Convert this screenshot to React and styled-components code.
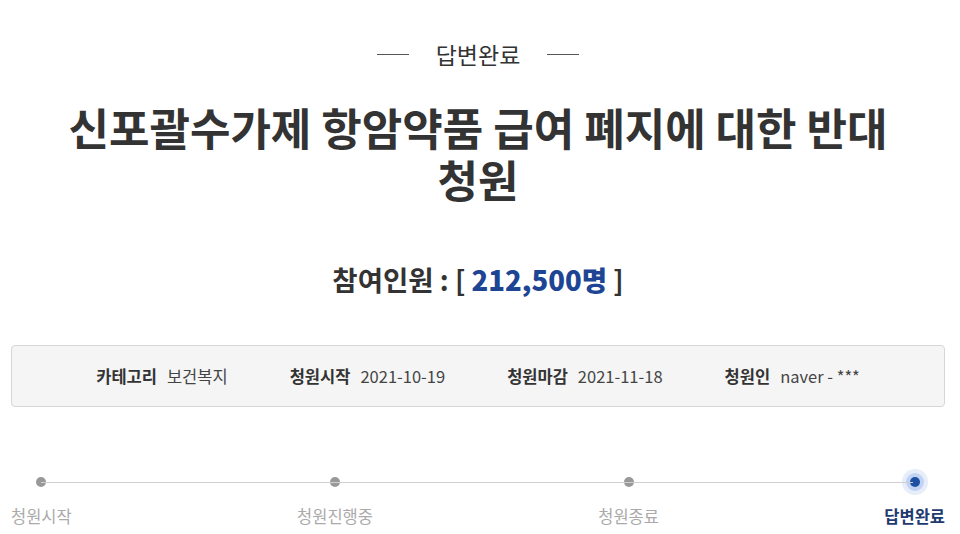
import React from "react";
import styled, { createGlobalStyle } from "styled-components";

const GlobalStyle = createGlobalStyle`
  html, body {
    margin: 0;
    padding: 0;
    background: #fff;
  }
  body {
    font-family: "Noto Sans CJK KR", "Noto Sans", sans-serif;
    color: #333;
  }
`;

const info = [
  { label: "카테고리", value: "보건복지" },
  { label: "청원시작", value: "2021-10-19" },
  { label: "청원마감", value: "2021-11-18" },
  { label: "청원인", value: "naver - ***" },
];

const steps = ["청원시작", "청원진행중", "청원종료", "답변완료"];

export default function App() {
  return (
    <>
      <GlobalStyle />
      <Page>
        <Status>
          <Dash />
          <span>답변완료</span>
          <Dash />
        </Status>

        <Title>
          신포괄수가제 항암약품 급여 폐지에 대한 반대
          <br />
          청원
        </Title>

        <Count>
          참여인원 : [ <strong>212,500명</strong> ]
        </Count>

        <InfoBox>
          {info.map((item) => (
            <InfoItem key={item.label}>
              <InfoLabel>{item.label}</InfoLabel>
              <InfoValue>{item.value}</InfoValue>
            </InfoItem>
          ))}
        </InfoBox>

        <Track>
          {steps.map((step, i) => (
            <Step key={step}>
              <DotRow>
                <Dot active={i === steps.length - 1} />
              </DotRow>
              <StepLabel active={i === steps.length - 1}>{step}</StepLabel>
            </Step>
          ))}
        </Track>
      </Page>
    </>
  );
}

const Page = styled.div`
  width: 960px;
  height: 534px;
  box-sizing: border-box;
  padding: 39px 15px 0 11px;
  display: flex;
  flex-direction: column;
  align-items: stretch;
  overflow: hidden;
`;

const Status = styled.div`
  display: flex;
  justify-content: center;
  align-items: center;
  gap: 27px;
  height: 30px;
  font-size: 23px;
  color: #333;
`;

const Dash = styled.i`
  display: block;
  width: 32px;
  height: 1px;
  background: #555;
`;

const Title = styled.h1`
  margin: 32px 0 0;
  text-align: center;
  font-size: 44px;
  line-height: 52px;
  font-weight: 700;
  color: #333;
  letter-spacing: 0;
`;

const Count = styled.div`
  margin-top: 56px;
  text-align: center;
  font-size: 27.5px;
  line-height: 36px;
  font-weight: 700;
  color: #333;

  strong {
    color: #1d4594;
  }
`;

const InfoBox = styled.div`
  margin-top: 48px;
  height: 62px;
  box-sizing: border-box;
  border: 1px solid #d6d6d6;
  border-radius: 4px;
  background: #f5f5f5;
  display: flex;
  justify-content: center;
  align-items: center;
  gap: 62px;
`;

const InfoItem = styled.div`
  display: flex;
  align-items: center;
  gap: 10px;
  font-size: 16.5px;
`;

const InfoLabel = styled.span`
  font-weight: 700;
  color: #333;
`;

const InfoValue = styled.span`
  color: #444;
`;

const Track = styled.div`
  position: relative;
  margin-top: 62px;
  display: flex;
  justify-content: space-between;

  &::before {
    content: "";
    position: absolute;
    left: 30px;
    right: 32px;
    top: 13px;
    height: 1px;
    background: #cfcfcf;
  }
`;

const Step = styled.div`
  display: flex;
  flex-direction: column;
  align-items: center;
  gap: 10px;
`;

const DotRow = styled.div`
  height: 26px;
  display: flex;
  align-items: center;
  justify-content: center;
`;

const Dot = styled.span`
  display: block;
  width: 10px;
  height: 10px;
  border-radius: 50%;
  background: ${(p) => (p.active ? "#1f4fa3" : "#999")};
  box-shadow: ${(p) =>
    p.active
      ? "0 0 0 4px rgba(120, 160, 230, 0.35), 0 0 0 8px rgba(120, 160, 230, 0.18)"
      : "none"};
`;

const StepLabel = styled.span`
  font-size: 16.5px;
  line-height: 22px;
  font-weight: ${(p) => (p.active ? 700 : 400)};
  color: ${(p) => (p.active ? "#1e3a70" : "#aaa")};
`;
